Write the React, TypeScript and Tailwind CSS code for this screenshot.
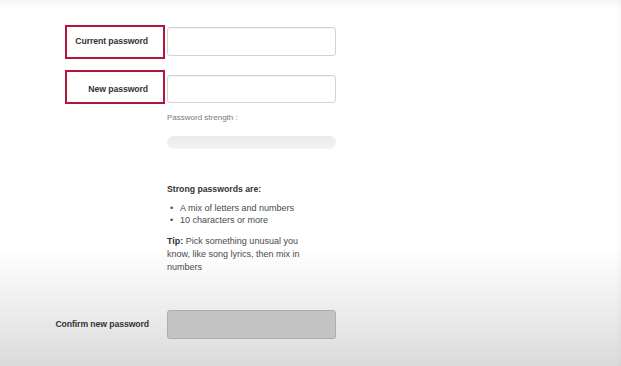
import React from 'react';

const font = {fontFamily: '"Liberation Sans", Arial, sans-serif'};

function Field({disabled = false, className = ''}: {disabled?: boolean; className?: string}) {
  return (
    <div
      className={
        (disabled
          ? 'bg-[#c3c3c3] border-[#adadad] '
          : 'bg-white border-[#d3d3d3] shadow-[inset_0_1px_1px_rgba(0,0,0,0.05)] ') +
        'w-[169px] border rounded-[3px] ' +
        className
      }
    />
  );
}

function BoxedLabel({text, textClass = ''}: {text: string; textClass?: string}) {
  return (
    <div className="w-[125px] flex justify-end">
      <div className="w-[100px] h-[34px] border-2 border-[#b3163c] flex items-center justify-end pr-[15px]">
        <span className={'text-[8.7px] font-bold text-[#333] tracking-[-0.1px] whitespace-nowrap ' + textClass}>
          {text}
        </span>
      </div>
    </div>
  );
}

export default function App() {
  return (
    <div
      style={font}
      className="relative w-[621px] h-[366px] overflow-hidden bg-[linear-gradient(to_bottom,#ffffff_0%,#ffffff_68%,#f2f2f2_80%,#dbdbdb_100%)]"
    >
      <div className="absolute inset-x-0 top-0 h-[7px] bg-[linear-gradient(to_bottom,#f5f5f5,#fdfdfd)]" />
      <div className="absolute inset-y-0 right-0 w-[6px] bg-[linear-gradient(to_right,transparent,rgba(0,0,0,0.025))]" />

      <div className="relative pl-[40px] pt-[25px]">
        <div className="flex items-start">
          <BoxedLabel text="Current password" />
          <Field className="ml-[2px] mt-[2px] h-[29px]" />
        </div>

        <div className="flex items-start mt-[11px]">
          <BoxedLabel text="New password" textClass="mt-[5px]" />
          <Field className="ml-[2px] mt-[5px] h-[28px]" />
        </div>

        <div className="ml-[127px] w-[169px]">
          <div className="mt-[9px] text-[8px] text-[#7a7a7a] leading-[10px]">Password strength :</div>
          <div className="mt-[13px] h-[13px] rounded-full bg-[linear-gradient(to_bottom,#ebebeb,#f3f3f3)]" />

          <div className="mt-[34px] text-[8.7px] font-bold text-[#333] leading-[12px]">Strong passwords are:</div>
          <div className="mt-[7px] text-[9px] text-[#4a4a4a] leading-[12px]">
            <div className="flex">
              <span className="w-[13px] pl-[3px]">•</span>
              <span>A mix of letters and numbers</span>
            </div>
            <div className="flex">
              <span className="w-[13px] pl-[3px]">•</span>
              <span>10 characters or more</span>
            </div>
          </div>
          <p className="mt-[9px] text-[9px] text-[#4a4a4a] leading-[13px] w-[140px]">
            <b className="text-[#333]">Tip:</b> Pick something unusual you know, like song lyrics, then mix in numbers
          </p>
        </div>

        <div className="flex items-center mt-[36px]">
          <div className="w-[125px] flex justify-end pr-[16px]">
            <span className="text-[8.7px] font-bold text-[#333] tracking-[-0.1px] whitespace-nowrap">
              Confirm new password
            </span>
          </div>
          <Field disabled className="ml-[2px] h-[29px]" />
        </div>
      </div>
    </div>
  );
}
